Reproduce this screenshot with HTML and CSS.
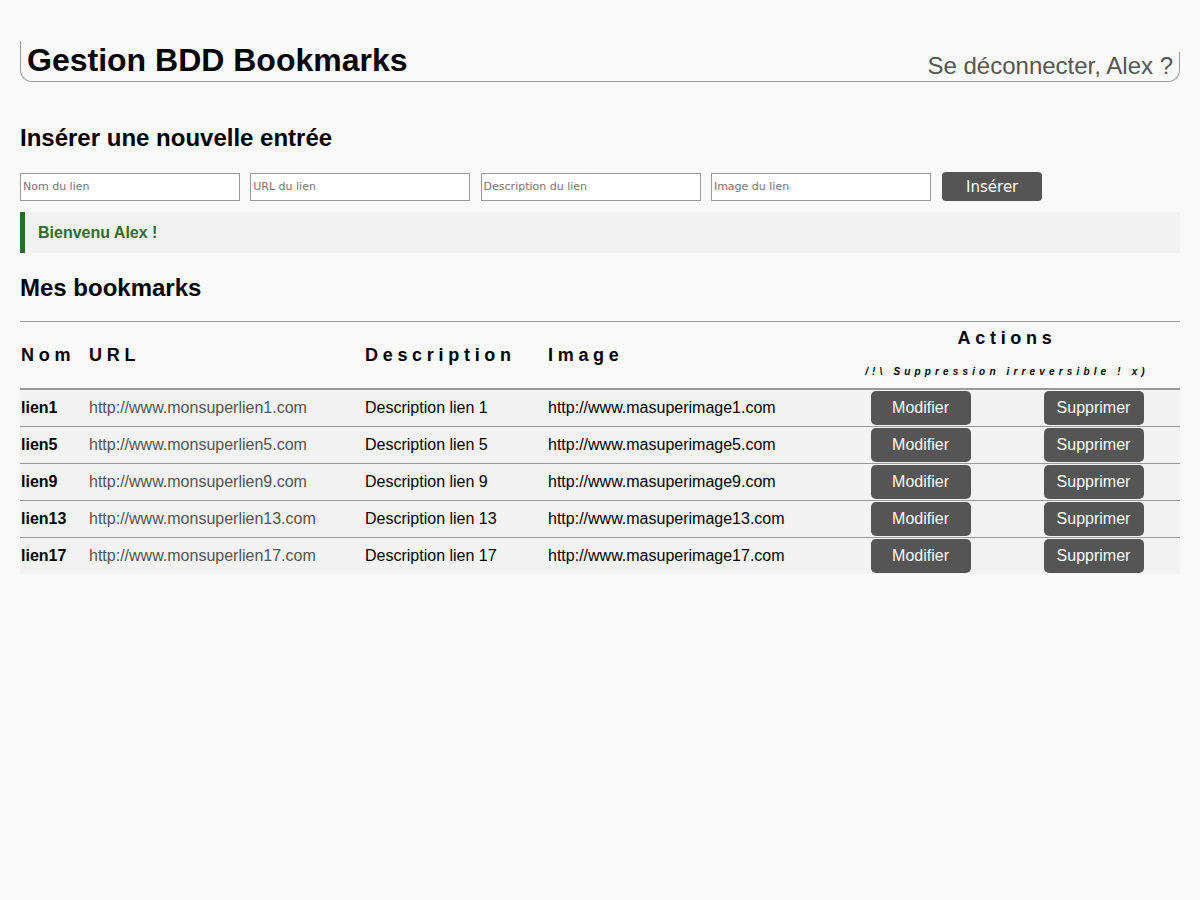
FILE: index.html
```html
<!DOCTYPE html>
<html lang="fr">
<head>
<meta charset="utf-8">
<title>Gestion BDD Bookmarks</title>
<link rel="stylesheet" href="styles.css">
</head>
<body>
<div class="page">
  <header class="top">
    <h1 class="title">Gestion BDD Bookmarks</h1>
    <a class="logout" href="#">Se déconnecter, Alex ?</a>
  </header>

  <h2 class="section insert-title">Insérer une nouvelle entrée</h2>
  <form class="insert-form">
    <input class="field" type="text" placeholder="Nom du lien">
    <input class="field" type="text" placeholder="URL du lien">
    <input class="field" type="text" placeholder="Description du lien">
    <input class="field" type="text" placeholder="Image du lien">
    <button class="insert-btn" type="button">Insérer</button>
  </form>

  <div class="message">Bienvenu Alex !</div>

  <h2 class="section list-title">Mes bookmarks</h2>
  <table class="bookmarks">
    <colgroup>
      <col class="c-nom"><col class="c-url"><col class="c-desc"><col class="c-img"><col class="c-act"><col class="c-act">
    </colgroup>
    <thead>
      <tr class="h1row">
        <th class="hcell" rowspan="2">Nom</th>
        <th class="hcell" rowspan="2">URL</th>
        <th class="hcell" rowspan="2">Description</th>
        <th class="hcell" rowspan="2">Image</th>
        <th class="hactions" colspan="2">Actions</th>
      </tr>
      <tr class="h2row">
        <th class="hwarn" colspan="2">/!\ Suppression irreversible ! x)</th>
      </tr>
    </thead>
    <tbody>
      <tr>
        <td class="nom">lien1</td>
        <td class="url">http://www.monsuperlien1.com</td>
        <td>Description lien 1</td>
        <td>http://www.masuperimage1.com</td>
        <td class="act"><button class="row-btn" type="button">Modifier</button></td>
        <td class="act"><button class="row-btn" type="button">Supprimer</button></td>
      </tr>
      <tr>
        <td class="nom">lien5</td>
        <td class="url">http://www.monsuperlien5.com</td>
        <td>Description lien 5</td>
        <td>http://www.masuperimage5.com</td>
        <td class="act"><button class="row-btn" type="button">Modifier</button></td>
        <td class="act"><button class="row-btn" type="button">Supprimer</button></td>
      </tr>
      <tr>
        <td class="nom">lien9</td>
        <td class="url">http://www.monsuperlien9.com</td>
        <td>Description lien 9</td>
        <td>http://www.masuperimage9.com</td>
        <td class="act"><button class="row-btn" type="button">Modifier</button></td>
        <td class="act"><button class="row-btn" type="button">Supprimer</button></td>
      </tr>
      <tr>
        <td class="nom">lien13</td>
        <td class="url">http://www.monsuperlien13.com</td>
        <td>Description lien 13</td>
        <td>http://www.masuperimage13.com</td>
        <td class="act"><button class="row-btn" type="button">Modifier</button></td>
        <td class="act"><button class="row-btn" type="button">Supprimer</button></td>
      </tr>
      <tr>
        <td class="nom">lien17</td>
        <td class="url">http://www.monsuperlien17.com</td>
        <td>Description lien 17</td>
        <td>http://www.masuperimage17.com</td>
        <td class="act"><button class="row-btn" type="button">Modifier</button></td>
        <td class="act"><button class="row-btn" type="button">Supprimer</button></td>
      </tr>
    </tbody>
  </table>
</div>
</body>
</html>
```
FILE: styles.css
```css
html, body {
  margin: 0;
  padding: 0;
  background: #f9f9f9;
}
body {
  font-family: "Liberation Sans", Arial, sans-serif;
  font-size: 16px;
  color: #000;
}
.page {
  padding: 41px 20px 0;
}

/* header */
.top {
  display: flex;
  align-items: flex-end;
}
.title {
  flex: 1;
  margin: 0;
  padding: 0 0 2px 6px;
  font-size: 32px;
  font-weight: bold;
  line-height: 38px;
  border-left: 1px solid #999;
  border-bottom: 1px solid #999;
  border-bottom-left-radius: 12px;
}
.logout {
  font-size: 24px;
  line-height: 27px;
  padding-bottom: 2px;
  color: #555;
  text-decoration: none;
  padding-right: 6px;
  border-right: 1px solid #999;
  border-bottom: 1px solid #999;
  border-bottom-right-radius: 12px;
}

/* section titles */
.section {
  margin: 0;
  font-size: 24px;
  font-weight: bold;
  line-height: 28px;
}
.insert-title {
  margin-top: 42px;
}
.list-title {
  margin-top: 21px;
}

/* insert form */
.insert-form {
  display: flex;
  align-items: center;
  gap: 10.3px;
  margin: 20px 0 0;
}
.field {
  box-sizing: border-box;
  width: 220px;
  height: 28px;
  margin: 0;
  padding: 1px 2px;
  border: 1px solid #999;
  background: #fff;
  font-family: "DejaVu Sans", Verdana, sans-serif;
  font-size: 11px;
  color: #333;
}
.field::placeholder {
  color: #7a727a;
}
.insert-btn {
  width: 100px;
  height: 29px;
  margin-left: 1px;
  border: none;
  border-radius: 4px;
  background: #555;
  color: #fff;
  font-family: "DejaVu Sans", Verdana, sans-serif;
  font-size: 15px;
  padding: 0;
}

/* message */
.message {
  margin-top: 11px;
  height: 41px;
  box-sizing: border-box;
  padding: 0 13px;
  display: flex;
  align-items: center;
  border-left: 5px solid #2e6a2e;
  background: #f2f2f2;
  color: #336b2c;
  font-weight: bold;
  font-size: 16px;
}

/* table */
.bookmarks {
  width: 100%;
  margin-top: 19px;
  table-layout: fixed;
  border-collapse: separate;
  border-spacing: 0;
  border-top: 1px solid #999;
}
.c-nom { width: 68px; }
.c-url { width: 276px; }
.c-desc { width: 183px; }
.c-img { width: 287px; }
.c-act { width: 173px; }

.hcell {
  text-align: left;
  vertical-align: middle;
  padding: 0 1px;
  font-size: 18px;
  font-weight: bold;
  letter-spacing: 4.7px;
  border-bottom: 2px solid #999;
}
.hactions {
  height: 33px;
  padding: 0 1px;
  box-sizing: border-box;
  text-align: center;
  vertical-align: middle;
  font-size: 18px;
  font-weight: bold;
  letter-spacing: 4.7px;
}
.hwarn {
  height: 35px;
  padding: 0 1px;
  box-sizing: border-box;
  text-align: center;
  vertical-align: middle;
  font-size: 10px;
  font-style: italic;
  font-weight: bold;
  letter-spacing: 4.15px;
  border-bottom: 2px solid #999;
}

.bookmarks tbody tr {
  background: #f3f3f3;
}
.bookmarks td {
  padding: 1px;
  vertical-align: middle;
  white-space: nowrap;
  border-bottom: 1px solid #999;
}
.bookmarks tbody tr:last-child td {
  border-bottom: none;
}
.nom {
  font-weight: bold;
}
.url {
  color: #555;
}
.act {
  text-align: center;
}
.row-btn {
  width: 100px;
  height: 34px;
  border: none;
  border-radius: 5px;
  background: #555;
  color: #fff;
  font-family: "Liberation Sans", Arial, sans-serif;
  font-size: 16px;
  padding: 0;
  vertical-align: middle;
}
```
